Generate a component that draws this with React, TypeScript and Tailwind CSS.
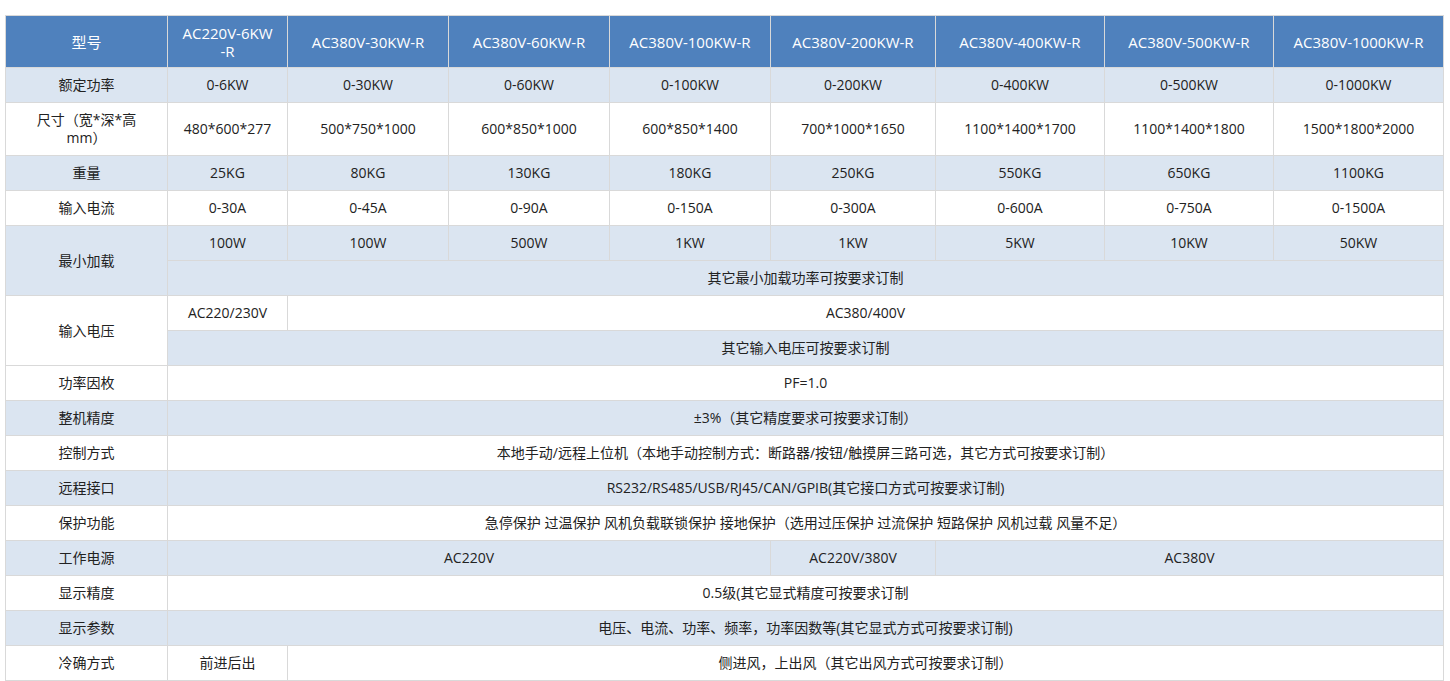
const cols = [162, 120, 161, 161, 161, 165, 169, 169, 170];
const heads = ["AC220V-6KW-R", "AC380V-30KW-R", "AC380V-60KW-R", "AC380V-100KW-R", "AC380V-200KW-R", "AC380V-400KW-R", "AC380V-500KW-R", "AC380V-1000KW-R"];

const B = "bg-[#dbe5f1]";
const W = "bg-white";
const td = "border border-[#d9d9d9] text-center align-middle px-1 leading-[18px]";

function Row({ label, cells, bg }: { label: string; cells: string[]; bg: string }) {
  return (
    <tr className={`h-[35px] ${bg}`}>
      <td className={td}>{label}</td>
      {cells.map((c, i) => (
        <td key={i} className={td}>{c}</td>
      ))}
    </tr>
  );
}

function Span({ label, text, bg }: { label: string; text: string; bg: string }) {
  return (
    <tr className={`h-[35px] ${bg}`}>
      <td className={td}>{label}</td>
      <td colSpan={8} className={td}>{text}</td>
    </tr>
  );
}

export default function App() {
  return (
    <div className="bg-white w-[1450px] h-[681px] pt-[15px] pl-[5px] text-[14px] text-[#222]" style={{ fontFamily: '"Open Sans", "Noto Sans CJK SC", sans-serif' }}>
      <table className="table-fixed border-collapse w-[1438px]">
        <colgroup>
          {cols.map((w, i) => (
            <col key={i} style={{ width: w }} />
          ))}
        </colgroup>
        <tbody>
          <tr className="h-[52px] bg-[#4f81bd] text-white text-[15px]">
            <td className={td}>型号</td>
            {heads.map((h, i) => (
              <td key={i} className={`${td} break-all px-[14px]`}>{h}</td>
            ))}
          </tr>
          <Row bg={B} label="额定功率" cells={["0-6KW", "0-30KW", "0-60KW", "0-100KW", "0-200KW", "0-400KW", "0-500KW", "0-1000KW"]} />
          <tr className={`h-[53px] ${W}`}>
            <td className={`${td} px-4`}>尺寸（宽*深*高mm）</td>
            {["480*600*277", "500*750*1000", "600*850*1000", "600*850*1400", "700*1000*1650", "1100*1400*1700", "1100*1400*1800", "1500*1800*2000"].map((c, i) => (
              <td key={i} className={td}>{c}</td>
            ))}
          </tr>
          <Row bg={B} label="重量" cells={["25KG", "80KG", "130KG", "180KG", "250KG", "550KG", "650KG", "1100KG"]} />
          <Row bg={W} label="输入电流" cells={["0-30A", "0-45A", "0-90A", "0-150A", "0-300A", "0-600A", "0-750A", "0-1500A"]} />
          <tr className={`h-[35px] ${B}`}>
            <td rowSpan={2} className={td}>最小加载</td>
            {["100W", "100W", "500W", "1KW", "1KW", "5KW", "10KW", "50KW"].map((c, i) => (
              <td key={i} className={td}>{c}</td>
            ))}
          </tr>
          <tr className={`h-[35px] ${B}`}>
            <td colSpan={8} className={td}>其它最小加载功率可按要求订制</td>
          </tr>
          <tr className={`h-[35px] ${W}`}>
            <td rowSpan={2} className={`${td} ${W}`}>输入电压</td>
            <td className={td}>AC220/230V</td>
            <td colSpan={7} className={td}>AC380/400V</td>
          </tr>
          <tr className={`h-[35px] ${B}`}>
            <td colSpan={8} className={td}>其它输入电压可按要求订制</td>
          </tr>
          <Span bg={W} label="功率因枚" text="PF=1.0" />
          <Span bg={B} label="整机精度" text="±3%（其它精度要求可按要求订制）" />
          <Span bg={W} label="控制方式" text="本地手动/远程上位机（本地手动控制方式：断路器/按钮/触摸屏三路可选，其它方式可按要求订制）" />
          <Span bg={B} label="远程接口" text="RS232/RS485/USB/RJ45/CAN/GPIB(其它接口方式可按要求订制)" />
          <Span bg={W} label="保护功能" text="急停保护 过温保护 风机负载联锁保护 接地保护（选用过压保护 过流保护 短路保护  风机过载 风量不足）" />
          <tr className={`h-[35px] ${B}`}>
            <td className={td}>工作电源</td>
            <td colSpan={4} className={td}>AC220V</td>
            <td className={td}>AC220V/380V</td>
            <td colSpan={3} className={td}>AC380V</td>
          </tr>
          <Span bg={W} label="显示精度" text="0.5级(其它显式精度可按要求订制" />
          <Span bg={B} label="显示参数" text="电压、电流、功率、频率，功率因数等(其它显式方式可按要求订制)" />
          <tr className={`h-[35px] ${W}`}>
            <td className={td}>冷确方式</td>
            <td className={td}>前进后出</td>
            <td colSpan={7} className={td}>侧进风，上出风（其它出风方式可按要求订制）</td>
          </tr>
        </tbody>
      </table>
    </div>
  );
}
